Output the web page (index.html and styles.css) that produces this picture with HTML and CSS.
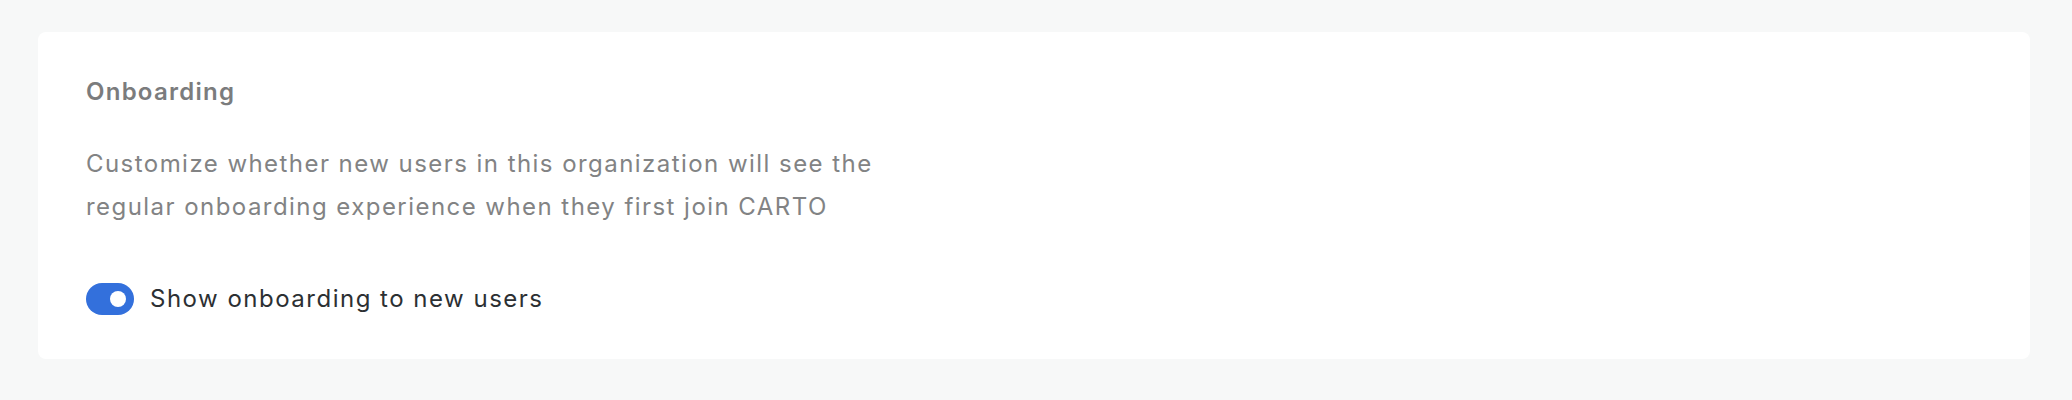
FILE: index.html
```html
<!DOCTYPE html>
<html lang="en">
<head>
<meta charset="utf-8">
<title>Onboarding</title>
<link rel="stylesheet" href="styles.css">
</head>
<body>
<main class="page">
  <section class="card">
    <h2 class="card-title">Onboarding</h2>
    <p class="card-desc">Customize whether new users in this organization will see the<br>regular onboarding experience when they first join CARTO</p>
    <label class="switch-row">
      <span class="switch is-on"><span class="switch-knob"></span></span>
      <span class="switch-label">Show onboarding to new users</span>
    </label>
  </section>
</main>
</body>
</html>
```
FILE: styles.css
```css
html, body {
  margin: 0;
  padding: 0;
}
body {
  background: #f7f8f8;
  font-family: Inter, "Noto Sans", sans-serif;
  height: 400px;
}
.page {
  padding: 32px 42px 0 38px;
}
.card {
  background: #ffffff;
  border-radius: 8px;
  height: 327px;
  box-sizing: border-box;
  padding: 44px 48px 0 48px;
  display: flex;
  flex-direction: column;
}
.card-title {
  margin: 0;
  font-size: 24px;
  line-height: 32px;
  font-weight: 600;
  color: #7b7c7d;
  letter-spacing: 1.25px;
}
.card-desc {
  margin: 35px 0 0 0;
  font-size: 24px;
  line-height: 42.67px;
  font-weight: 400;
  color: #828384;
  letter-spacing: 1.45px;
}
.switch-row {
  margin-top: 55px;
  display: flex;
  align-items: center;
  gap: 16px;
}
.switch {
  width: 48px;
  height: 32px;
  border-radius: 16px;
  background: #3370dc;
  box-sizing: border-box;
  padding: 8px;
  display: flex;
  justify-content: flex-end;
  align-items: center;
}
.switch-knob {
  width: 16px;
  height: 16px;
  border-radius: 50%;
  background: #ffffff;
}
.switch-label {
  font-size: 24px;
  line-height: 32px;
  color: #2c3033;
  letter-spacing: 1.5px;
}
```
